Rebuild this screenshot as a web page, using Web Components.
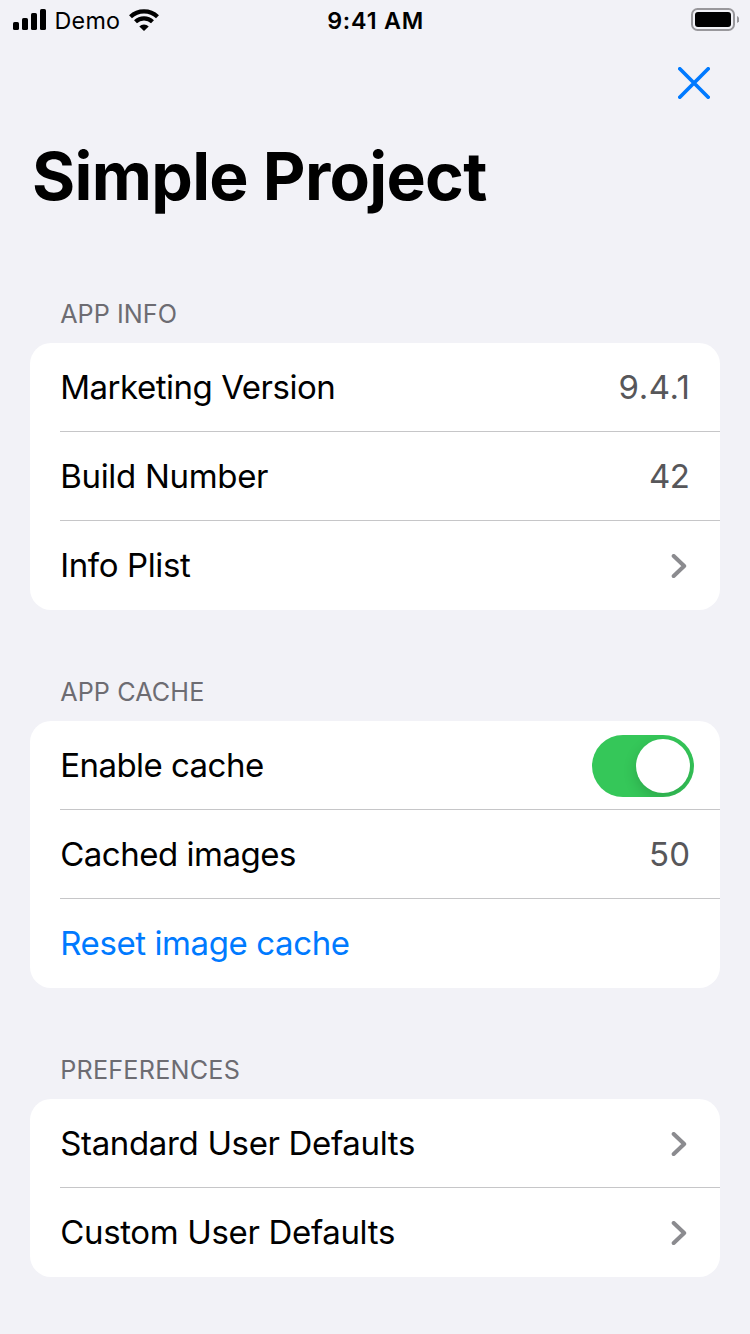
<!DOCTYPE html>
<html lang="en">
<head>
<meta charset="utf-8">
<title>Simple Project</title>
<style>
  html, body { margin: 0; height: 100%; }
  body { background: #f2f2f7; font-family: Inter, "Liberation Sans", sans-serif; color: #000; overflow: hidden; }
</style>
</head>
<body>
<settings-screen>
  <status-bar slot="status" carrier="Demo" time="9:41 AM"></status-bar>
  <close-button slot="close"></close-button>
  <span slot="title">Simple Project</span>
  <settings-section heading="APP INFO" style="--head-track:.05px">
    <settings-row style="--track:-.47px">Marketing Version<row-value slot="end" style="letter-spacing:.5px;margin-right:-.5px">9.4.1</row-value></settings-row>
    <settings-row style="--track:-.31px">Build Number<row-value slot="end" style="letter-spacing:-.4px;margin-right:.4px">42</row-value></settings-row>
    <settings-row style="--track:-.38px">Info Plist<chevron-icon slot="end"></chevron-icon></settings-row>
  </settings-section>
  <settings-section heading="APP CACHE" style="--head-track:.1px">
    <settings-row style="--track:-.54px">Enable cache<toggle-switch slot="end"></toggle-switch></settings-row>
    <settings-row style="--track:-.48px">Cached images<row-value slot="end">50</row-value></settings-row>
    <settings-row style="--track:-.4px;color:#007aff">Reset image cache</settings-row>
  </settings-section>
  <settings-section heading="PREFERENCES" style="--head-track:.22px">
    <settings-row style="--track:-.34px">Standard User Defaults<chevron-icon slot="end"></chevron-icon></settings-row>
    <settings-row style="--track:-.34px">Custom User Defaults<chevron-icon slot="end"></chevron-icon></settings-row>
  </settings-section>
</settings-screen>
<script>
  const define = (name, html, setup) => customElements.define(name, class extends HTMLElement {
    connectedCallback() {
      if (this.shadowRoot) return;
      const root = this.attachShadow({ mode: 'open' });
      root.innerHTML = html;
      if (setup) setup(this, root);
    }
  });

  define('settings-screen', `
    <style>
      :host { display: flex; flex-direction: column; width: 750px; height: 1334px; overflow: hidden; }
      .nav { display: flex; justify-content: flex-end; height: 95px; padding: 26px 40px 0 0; box-sizing: border-box; }
      h1 { margin: 0; padding-left: 32px; font-size: 66px; line-height: 80px; font-weight: 700; letter-spacing: -.7px; height: 96px; }
    </style>
    <slot name="status"></slot>
    <div class="nav"><slot name="close"></slot></div>
    <h1><slot name="title"></slot></h1>
    <main><slot></slot></main>`);

  define('status-bar', `
    <style>
      :host { display: grid; grid-template-columns: 1fr auto 1fr; height: 41px; line-height: 41px; font-size: 23.3px; flex: none; }
      .left, .right { display: flex; }
      .left { padding-left: 13px; }
      .right { justify-content: flex-end; padding-right: 11px; }
      svg { display: block; height: 41px; }
      .carrier { margin-left: 7.5px; letter-spacing: .25px; width: 74.5px; }
      .time { font-weight: 600; letter-spacing: .8px; margin-left: .6px; margin-right: -.6px; }
    </style>
    <div class="left">
      <svg width="34" height="41"><rect y="22" width="6" height="8" rx="1.6"/><rect x="9" y="18" width="6" height="12" rx="1.6"/><rect x="18" y="13" width="6" height="17" rx="1.6"/><rect x="27" y="9" width="6" height="21" rx="1.6"/></svg>
      <span class="carrier"></span>
      <svg width="30" height="41" viewBox="0 0 30 41"><g fill="none" stroke="#000" stroke-width="4.200"><path d="M1.500 16.700a19.600 19.600 0 0 1 27 0"/><path d="M6.500 21.800a12.200 12.200 0 0 1 17 0"/></g><path d="M15 31l-4.700-4.600a6.600 6.600 0 0 1 9.400 0z"/></svg>
    </div>
    <span class="time"></span>
    <div class="right">
      <svg width="48" height="41" viewBox="0 0 48 41"><rect x="1" y="9" width="42" height="21" rx="5.5" fill="none" stroke="#99989c" stroke-width="2"/><rect x="4" y="12" width="36" height="15" rx="3"/><path d="M46 16q2.400 1 2.400 3.500t-2.400 3.500z" fill="#99989c"/></svg>
    </div>`, (el, root) => {
      root.querySelector('.carrier').textContent = el.getAttribute('carrier');
      root.querySelector('.time').textContent = el.getAttribute('time');
    });

  define('close-button', `
    <style>:host { display: block; width: 32px; height: 32px; } svg { display: block; }</style>
    <svg width="32" height="32"><path d="M1.800 1.800l28.400 28.400M30.200 1.800l-28.400 28.400" stroke="#007aff" stroke-width="3.700" stroke-linecap="round"/></svg>`);

  define('settings-section', `
    <style>
      :host { display: block; padding: 0 30px; }
      h2 { margin: 0; height: 111px; box-sizing: border-box; padding: 68px 0 0 30.2px; font-size: 25.2px; line-height: 28px; font-weight: 400; color: #6d6c72; letter-spacing: var(--head-track, 0); }
      .card { display: flex; flex-direction: column; background: #fff; border-radius: 21px; overflow: hidden; }
      ::slotted(:not(:last-child)) { --line: #c6c6c8; }
    </style>
    <h2></h2>
    <div class="card"><slot></slot></div>`, (el, root) => {
      root.querySelector('h2').textContent = el.getAttribute('heading');
    });

  define('settings-row', `
    <style>
      :host { display: block; padding-left: 30px; }
      .row { display: flex; justify-content: space-between; height: 88px; border-bottom: 1px solid var(--line, transparent); font-size: 33px; line-height: 88px; padding-right: 30px; }
      .label { letter-spacing: var(--track, 0); margin-left: .2px; white-space: nowrap; }
    </style>
    <div class="row"><span class="label"><slot></slot></span><slot name="end"></slot></div>`);

  define('row-value', `
    <style>:host { display: block; color: #57575a; }</style><slot></slot>`);

  define('chevron-icon', `
    <style>:host { display: block; margin: 33px 3px 0 0; height: 24px; } svg { display: block; }</style>
    <svg width="16" height="24"><path d="M2.700 2l10.500 10L2.700 22" fill="none" stroke="#8b8b8f" stroke-width="4" stroke-linecap="round" stroke-linejoin="round"/></svg>`);

  define('toggle-switch', `
    <style>
      :host { display: flex; justify-content: flex-end; box-sizing: border-box; width: 102px; height: 62px; margin: 14px -4px 0 0; padding: 4px; border-radius: 31px; background: #35c759; overflow: hidden; }
      .knob { width: 54px; height: 54px; border-radius: 50%; background: #fff; box-shadow: 0 5px 14px rgba(0,0,0,.16); }
    </style>
    <div class="knob"></div>`);
</script>
</body>
</html>
